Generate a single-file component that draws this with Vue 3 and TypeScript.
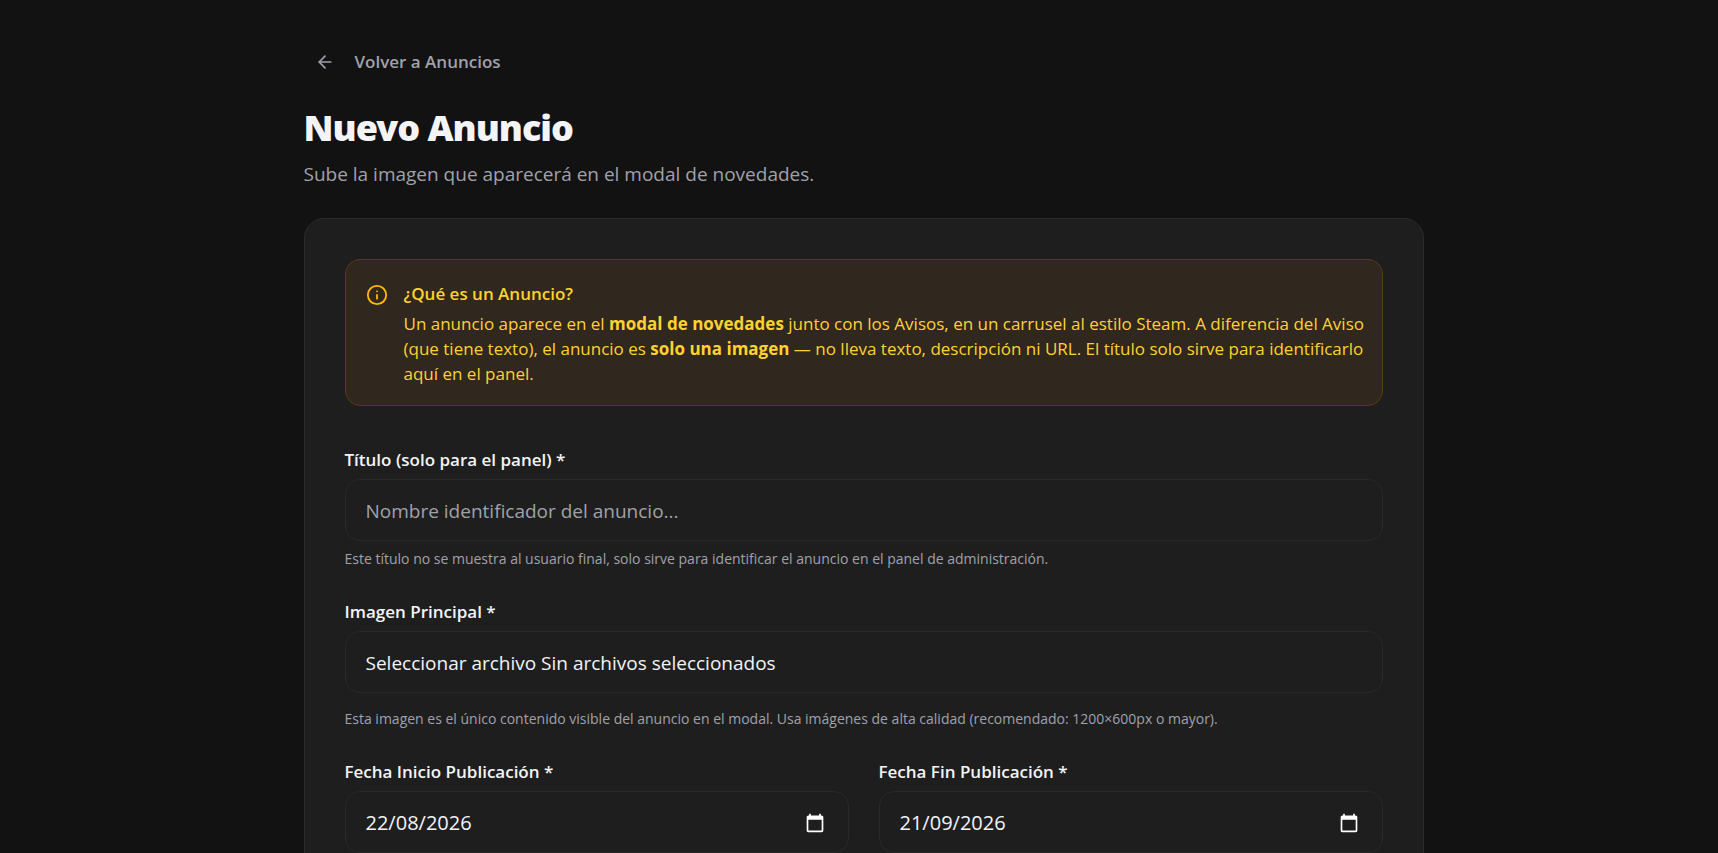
<script setup lang="ts">
import { ref } from 'vue'

interface DateField {
  id: string
  label: string
  value: string
}

const title = ref('')
const fileName = ref('')
const dates = ref<DateField[]>([
  { id: 'start-date', label: 'Fecha Inicio Publicación *', value: '22/08/2026' },
  { id: 'end-date', label: 'Fecha Fin Publicación *', value: '21/09/2026' },
])

function onFileChange(event: Event) {
  const files = (event.target as HTMLInputElement).files
  fileName.value = files && files.length ? files[0].name : ''
}
</script>

<template>
  <main class="page">
    <div class="content">
      <a class="back" href="#anuncios">
        <svg class="back-icon" viewBox="0 0 24 24" aria-hidden="true">
          <path d="m12 19-7-7 7-7" />
          <path d="M19 12H5" />
        </svg>
        Volver a Anuncios
      </a>

      <header class="heading">
        <h1>Nuevo Anuncio</h1>
        <p>Sube la imagen que aparecerá en el modal de novedades.</p>
      </header>

      <form class="card" @submit.prevent>
        <aside class="notice">
          <svg class="notice-icon" viewBox="0 0 24 24" aria-hidden="true">
            <circle cx="12" cy="12" r="10" />
            <path d="M12 16v-4" />
            <path d="M12 8h.01" />
          </svg>
          <div class="notice-body">
            <h2>¿Qué es un Anuncio?</h2>
            <p>
              Un anuncio aparece en el <strong>modal de novedades</strong> junto con los Avisos, en un carrusel al
              estilo Steam. A diferencia del Aviso (que tiene texto), el anuncio es
              <strong>solo una imagen</strong> — no lleva texto, descripción ni URL. El título solo sirve para
              identificarlo aquí en el panel.
            </p>
          </div>
        </aside>

        <div class="field">
          <label for="title">Título (solo para el panel) *</label>
          <input id="title" v-model="title" class="control" type="text" placeholder="Nombre identificador del anuncio..." />
          <p class="hint">
            Este título no se muestra al usuario final, solo sirve para identificar el anuncio en el panel de
            administración.
          </p>
        </div>

        <div class="field">
          <label for="image">Imagen Principal *</label>
          <div class="control file">
            <span>Seleccionar archivo {{ fileName || 'Sin archivos seleccionados' }}</span>
            <input id="image" type="file" accept="image/*" @change="onFileChange" />
          </div>
          <p class="hint hint-spaced">
            Esta imagen es el único contenido visible del anuncio en el modal. Usa imágenes de alta calidad
            (recomendado: 1200×600px o mayor).
          </p>
        </div>

        <div class="dates">
          <div v-for="field in dates" :key="field.id" class="field">
            <label :for="field.id">{{ field.label }}</label>
            <div class="control date">
              <input :id="field.id" v-model="field.value" type="text" inputmode="numeric" />
              <button type="button" aria-label="Abrir calendario">
                <svg viewBox="0 0 24 24" aria-hidden="true">
                  <path
                    fill-rule="evenodd"
                    d="M20 3h-1V1h-2v2H7V1H5v2H4c-1.100 0-2 .9-2 2v16c0 1.100.9 2 2 2h16c1.100 0 2-.9 2-2V5c0-1.100-.9-2-2-2zm0 18H4V8h16v13z"
                  />
                </svg>
              </button>
            </div>
          </div>
        </div>
      </form>
    </div>
  </main>
</template>

<style>
html,
body {
  background: #121212;
}

body {
  height: 100vh;
  overflow: hidden;
}
</style>

<style scoped>
* {
  box-sizing: border-box;
}

.page {
  padding: 40px 0 40px 9px;
  color: #f3f4f6;
  background: #121212;
  font-family: 'Open Sans', 'Noto Sans', sans-serif;
  font-size: 19px;
  line-height: 30px;
}

.content {
  width: 100%;
  max-width: 1120px;
  margin: 0 auto;
}

h1,
h2,
p {
  margin: 0;
}

.back {
  display: inline-flex;
  align-items: center;
  gap: 20px;
  height: 43px;
  padding: 0 11px;
  color: #a1a1aa;
  font-size: 17px;
  font-weight: 600;
  text-decoration: none;
}

.back-icon {
  width: 20px;
  height: 20px;
  fill: none;
  stroke: currentColor;
  stroke-width: 2;
  stroke-linecap: round;
  stroke-linejoin: round;
}

.heading {
  margin: 22px 0 29px;
}

h1 {
  font-family: 'Noto Sans', 'Open Sans', sans-serif;
  font-size: 36px;
  font-weight: 900;
  line-height: 45px;
  letter-spacing: -1px;
}

.heading p {
  margin-top: 9px;
  color: #a1a1aa;
}

.card {
  display: flex;
  flex-direction: column;
  gap: 30px;
  padding: 40px;
  background: #1e1e1e;
  border: 1px solid #2a2a2a;
  border-radius: 20px;
}

.notice {
  display: flex;
  gap: 16px;
  margin-bottom: 11px;
  padding: 21px 14px 19px 20px;
  color: #ffd230;
  background: #30271e;
  border: 1px solid #573c14;
  border-radius: 15px;
  font-size: 17px;
  line-height: 25px;
}

.notice-icon {
  flex: none;
  width: 22px;
  height: 22px;
  margin-top: 3px;
  fill: none;
  stroke: #ffb900;
  stroke-width: 2;
  stroke-linecap: round;
  stroke-linejoin: round;
}

h2 {
  margin-bottom: 5px;
  font-size: 17px;
  font-weight: 600;
  line-height: 25px;
}

.field {
  display: flex;
  flex-direction: column;
}

.field label {
  margin-bottom: 7px;
  font-size: 17px;
  font-weight: 600;
  line-height: 25px;
}

.control {
  width: 100%;
  height: 62px;
  padding: 2px 20px 0;
  color: #f3f4f6;
  background: transparent;
  border: 1px solid #292929;
  border-radius: 15px;
  font: inherit;
}

.control::placeholder {
  color: #a1a1aa;
  opacity: 1;
}

.hint {
  margin-top: 8px;
  color: #a1a1aa;
  font-size: 14px;
  line-height: 20px;
}

.hint-spaced {
  margin-top: 16px;
}

.file,
.date {
  position: relative;
  display: flex;
  align-items: center;
}

.file input {
  position: absolute;
  inset: 0;
  width: 100%;
  opacity: 0;
  cursor: pointer;
}

.dates {
  display: grid;
  grid-template-columns: 1fr 1fr;
  gap: 30px;
}

.date {
  padding-right: 23px;
  font-size: 20px;
}

.date input {
  flex: 1;
  min-width: 0;
  padding: 0;
  color: inherit;
  background: none;
  border: 0;
  font: inherit;
}

.date button {
  display: flex;
  padding: 0;
  color: #ffffff;
  background: none;
  border: 0;
  cursor: pointer;
}

.date svg {
  width: 20px;
  height: 20px;
  fill: currentColor;
}
</style>
